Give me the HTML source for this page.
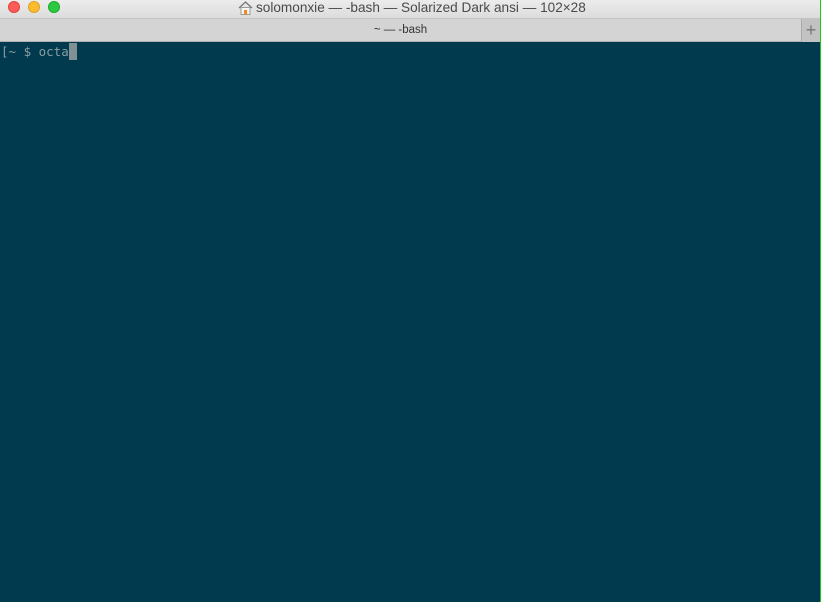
<!DOCTYPE html>
<html><head><meta charset="utf-8"><style>
*{margin:0;padding:0;box-sizing:border-box}
html,body{width:821px;height:602px;overflow:hidden;background:#013a4e}
#title{position:absolute;left:0;top:0;width:821px;height:18px;background:linear-gradient(#ececec,#dcdcdc);font:13.6px "Liberation Sans",sans-serif;color:#4a4a4a}
.dot{position:absolute;top:1px;width:12px;height:12px;border-radius:50%}
#tabs{position:absolute;left:0;top:18px;width:821px;height:24px;background:#d4d4d4;border-top:1px solid #c4c4c4;border-bottom:1px solid #b0b0b0}
#plus{position:absolute;left:801px;top:0;width:19px;height:23px;background:#c2c2c2;border-left:1px solid #aaa;color:#777;font:18px "Liberation Sans",sans-serif;text-align:center;line-height:22px}
#term{position:absolute;left:0;top:42px;width:820px;height:560px;background:#013a4e}
#edge{position:absolute;left:820px;top:0;width:1px;height:602px;background:#1ec81e}
#prompt{position:absolute;left:1px;top:43px;font:12.5px "DejaVu Sans Mono",monospace;color:#8a9ca0;white-space:pre;line-height:17px}
#cur{display:inline-block;width:8px;height:17px;background:#7f9195;vertical-align:top}
</style></head><body>
<div id="title">
<div class="dot" style="left:8px;background:#fc5b57;border:1px solid #e0443e"></div>
<div class="dot" style="left:28px;background:#fdbc2e;border:1px solid #dea123"></div>
<div class="dot" style="left:48px;background:#2ac940;border:1px solid #1aab29"></div>
<svg style="position:absolute;left:238px;top:1px" width="15" height="14" viewBox="0 0 15 14"><path d="M1 7 L7.5 1 L14 7" fill="none" stroke="#777" stroke-width="1.3"/><rect x="3" y="6.5" width="9" height="7" fill="#f4f4f4" stroke="#888" stroke-width="0.8"/><rect x="6" y="9" width="3" height="4.5" fill="#f08a1c"/></svg>
<div style="position:absolute;left:256px;top:0;line-height:16px">solomonxie — -bash — Solarized Dark ansi — 102×28</div>
</div>
<div id="tabs">
<div style="position:absolute;left:0;width:801px;top:0;text-align:center;font:11.5px 'Liberation Sans',sans-serif;color:#333;line-height:22px">~ — -bash</div>
<div id="plus">+</div>
</div>
<div id="term"></div>
<div id="prompt">[~ $ octa<span id="cur"></span></div>
<div id="edge"></div>
</body></html>
